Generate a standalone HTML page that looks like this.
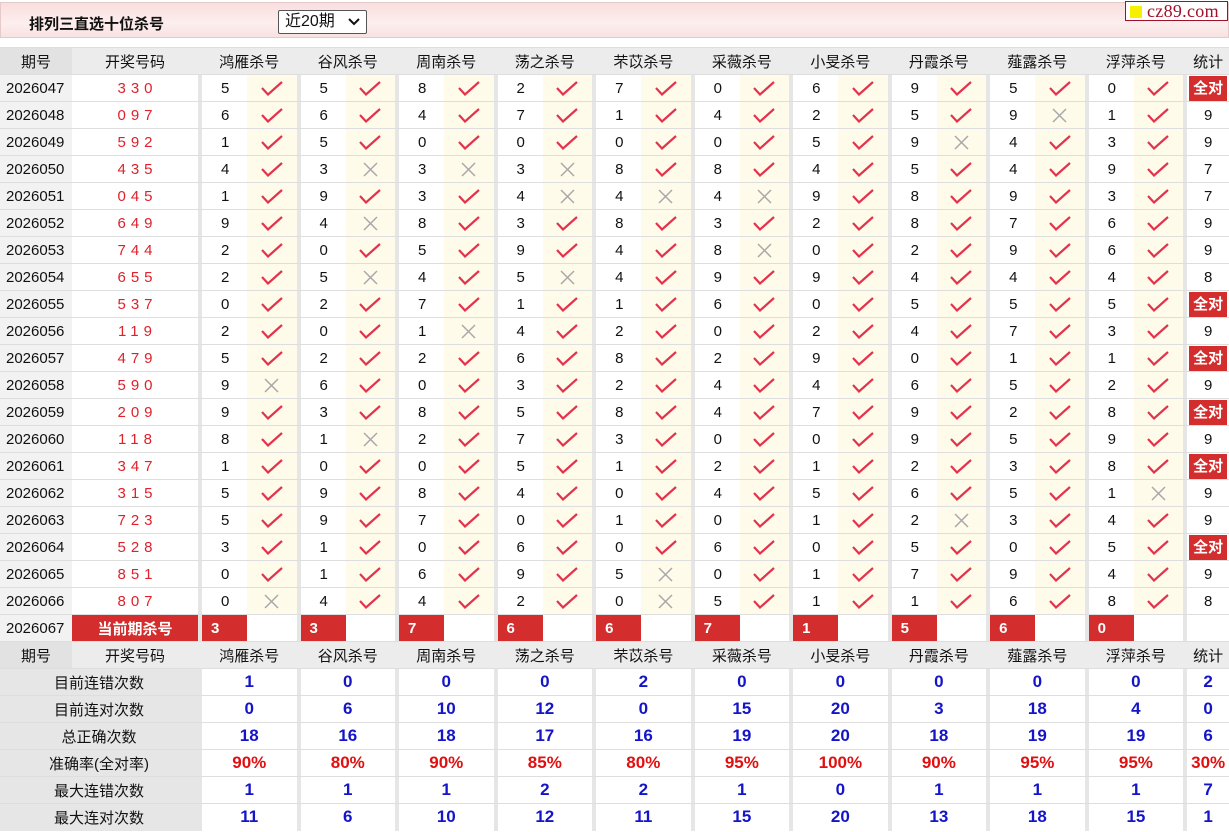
<!DOCTYPE html>
<html><head><meta charset="utf-8">
<style>
*{margin:0;padding:0;box-sizing:border-box}
body{width:1229px;height:832px;background:#fff;font-family:"Liberation Sans","Noto Sans CJK SC",sans-serif;font-size:15px;color:#111;position:relative;overflow:hidden}
.top{position:absolute;left:0;top:2px;width:1229px;height:36px;background:linear-gradient(#f9dede,#fdeeee 60%,#f8e2e2);border:1px solid #e6caca}
.title{position:absolute;left:28px;top:10px;font-weight:bold;font-size:15px;color:#111}
.sel{position:absolute;left:277px;top:7px;width:89px;height:24px;border:1px solid #555;background:#fff;font-size:16px;padding-left:6px;line-height:22px;border-radius:2px}
.sel svg{position:absolute;right:6px;top:7px}
.logo{position:absolute;left:1125px;top:1px;width:103px;height:20px;border:1px solid #a0102a;background:#fff;font-family:"Liberation Serif",serif;font-size:18px;color:#a0102a;line-height:18px;padding-left:21px;letter-spacing:0.3px}
.logo i{position:absolute;left:4px;top:4px;width:12px;height:12px;background:#f5f000}
table{position:absolute;left:0;top:47px;border-collapse:collapse;table-layout:fixed;width:1229px}
td{height:27px;border-top:1px solid #dedede;text-align:center;vertical-align:middle;padding:0;white-space:nowrap;overflow:hidden}
td.s{background:#e6e6e6}
tr.h td{background:#ececec;font-size:15px}
tr.h td.p{background:#e2e2e2}
td.p{background:#f2f2f2;text-align:left;padding-left:6px;font-size:15px}
td.h{color:#e0202a;letter-spacing:5px;padding-left:5px}
td.n{background:#fff;text-align:left;padding-left:19px}
td.m{background:#fffbeb}
td.t{background:#fff}
.qd{display:inline-block;background:#d32d2d;color:#fff;font-weight:bold;width:38px;height:25px;line-height:25px;font-size:15px}
tr.c td.r{background:#d32d2d;color:#fff;font-weight:bold;text-align:left;padding-left:9px}
tr.c td.rh{background:#d32d2d;color:#fff;font-weight:bold;font-size:15px}
tr.c td.w{background:#fff}
tr.st td.l{background:#e6e6e6;font-size:15px}
tr.st td.v{background:#fff;color:#1414c8;font-weight:bold;font-size:17px}
tr.st td.v.red{color:#e01010}
svg.k,svg.x{display:block;margin:0 auto}
</style></head><body>
<svg width="0" height="0" style="position:absolute">
<defs>
<g id="ck"><polyline points="1,7 7,13.5 21,1" fill="none" stroke="#e3334c" stroke-width="2.2" stroke-linejoin="miter"/></g>
<g id="xx"><path d="M2,2 L15,15 M15,2 L2,15" stroke="#a8a8a8" stroke-width="1.5" fill="none"/></g>
</defs></svg>
<div class="top"><div class="title">排列三直选十位杀号</div>
<div class="sel">近20期<svg width="12" height="8" viewBox="0 0 12 8"><path d="M1,1 L6,6 L11,1" fill="none" stroke="#111" stroke-width="2"/></svg></div></div>
<div class="logo"><i></i>cz89.com</div>

<table>
<colgroup><col style="width:72px"><col style="width:126px">
<col style="width:4px"><col style="width:45px"><col style="width:49.5px">
<col style="width:4px"><col style="width:45px"><col style="width:49.5px">
<col style="width:4px"><col style="width:45px"><col style="width:49.5px">
<col style="width:4px"><col style="width:45px"><col style="width:49.5px">
<col style="width:4px"><col style="width:45px"><col style="width:49.5px">
<col style="width:4px"><col style="width:45px"><col style="width:49.5px">
<col style="width:4px"><col style="width:45px"><col style="width:49.5px">
<col style="width:4px"><col style="width:45px"><col style="width:49.5px">
<col style="width:4px"><col style="width:45px"><col style="width:49.5px">
<col style="width:4px"><col style="width:45px"><col style="width:49.5px">
<col style="width:4px"><col style="width:42px"></colgroup>

<tr class="h"><td class="p" style="text-align:center;padding:0">期号</td><td>开奖号码</td><td class="s"></td><td colspan="2">鸿雁杀号</td><td class="s"></td><td colspan="2">谷风杀号</td><td class="s"></td><td colspan="2">周南杀号</td><td class="s"></td><td colspan="2">荡之杀号</td><td class="s"></td><td colspan="2">芣苡杀号</td><td class="s"></td><td colspan="2">采薇杀号</td><td class="s"></td><td colspan="2">小旻杀号</td><td class="s"></td><td colspan="2">丹霞杀号</td><td class="s"></td><td colspan="2">薤露杀号</td><td class="s"></td><td colspan="2">浮萍杀号</td><td class="s"></td><td>统计</td></tr>

<tr><td class="p">2026047</td><td class="h">330</td><td class="s"></td><td class="n">5</td><td class="m"><svg class="k" width="22" height="15"><use href="#ck"/></svg></td><td class="s"></td><td class="n">5</td><td class="m"><svg class="k" width="22" height="15"><use href="#ck"/></svg></td><td class="s"></td><td class="n">8</td><td class="m"><svg class="k" width="22" height="15"><use href="#ck"/></svg></td><td class="s"></td><td class="n">2</td><td class="m"><svg class="k" width="22" height="15"><use href="#ck"/></svg></td><td class="s"></td><td class="n">7</td><td class="m"><svg class="k" width="22" height="15"><use href="#ck"/></svg></td><td class="s"></td><td class="n">0</td><td class="m"><svg class="k" width="22" height="15"><use href="#ck"/></svg></td><td class="s"></td><td class="n">6</td><td class="m"><svg class="k" width="22" height="15"><use href="#ck"/></svg></td><td class="s"></td><td class="n">9</td><td class="m"><svg class="k" width="22" height="15"><use href="#ck"/></svg></td><td class="s"></td><td class="n">5</td><td class="m"><svg class="k" width="22" height="15"><use href="#ck"/></svg></td><td class="s"></td><td class="n">0</td><td class="m"><svg class="k" width="22" height="15"><use href="#ck"/></svg></td><td class="s"></td><td class="t"><span class="qd">全对</span></td></tr>

<tr><td class="p">2026048</td><td class="h">097</td><td class="s"></td><td class="n">6</td><td class="m"><svg class="k" width="22" height="15"><use href="#ck"/></svg></td><td class="s"></td><td class="n">6</td><td class="m"><svg class="k" width="22" height="15"><use href="#ck"/></svg></td><td class="s"></td><td class="n">4</td><td class="m"><svg class="k" width="22" height="15"><use href="#ck"/></svg></td><td class="s"></td><td class="n">7</td><td class="m"><svg class="k" width="22" height="15"><use href="#ck"/></svg></td><td class="s"></td><td class="n">1</td><td class="m"><svg class="k" width="22" height="15"><use href="#ck"/></svg></td><td class="s"></td><td class="n">4</td><td class="m"><svg class="k" width="22" height="15"><use href="#ck"/></svg></td><td class="s"></td><td class="n">2</td><td class="m"><svg class="k" width="22" height="15"><use href="#ck"/></svg></td><td class="s"></td><td class="n">5</td><td class="m"><svg class="k" width="22" height="15"><use href="#ck"/></svg></td><td class="s"></td><td class="n">9</td><td class="m"><svg class="x" width="17" height="17"><use href="#xx"/></svg></td><td class="s"></td><td class="n">1</td><td class="m"><svg class="k" width="22" height="15"><use href="#ck"/></svg></td><td class="s"></td><td class="t">9</td></tr>

<tr><td class="p">2026049</td><td class="h">592</td><td class="s"></td><td class="n">1</td><td class="m"><svg class="k" width="22" height="15"><use href="#ck"/></svg></td><td class="s"></td><td class="n">5</td><td class="m"><svg class="k" width="22" height="15"><use href="#ck"/></svg></td><td class="s"></td><td class="n">0</td><td class="m"><svg class="k" width="22" height="15"><use href="#ck"/></svg></td><td class="s"></td><td class="n">0</td><td class="m"><svg class="k" width="22" height="15"><use href="#ck"/></svg></td><td class="s"></td><td class="n">0</td><td class="m"><svg class="k" width="22" height="15"><use href="#ck"/></svg></td><td class="s"></td><td class="n">0</td><td class="m"><svg class="k" width="22" height="15"><use href="#ck"/></svg></td><td class="s"></td><td class="n">5</td><td class="m"><svg class="k" width="22" height="15"><use href="#ck"/></svg></td><td class="s"></td><td class="n">9</td><td class="m"><svg class="x" width="17" height="17"><use href="#xx"/></svg></td><td class="s"></td><td class="n">4</td><td class="m"><svg class="k" width="22" height="15"><use href="#ck"/></svg></td><td class="s"></td><td class="n">3</td><td class="m"><svg class="k" width="22" height="15"><use href="#ck"/></svg></td><td class="s"></td><td class="t">9</td></tr>

<tr><td class="p">2026050</td><td class="h">435</td><td class="s"></td><td class="n">4</td><td class="m"><svg class="k" width="22" height="15"><use href="#ck"/></svg></td><td class="s"></td><td class="n">3</td><td class="m"><svg class="x" width="17" height="17"><use href="#xx"/></svg></td><td class="s"></td><td class="n">3</td><td class="m"><svg class="x" width="17" height="17"><use href="#xx"/></svg></td><td class="s"></td><td class="n">3</td><td class="m"><svg class="x" width="17" height="17"><use href="#xx"/></svg></td><td class="s"></td><td class="n">8</td><td class="m"><svg class="k" width="22" height="15"><use href="#ck"/></svg></td><td class="s"></td><td class="n">8</td><td class="m"><svg class="k" width="22" height="15"><use href="#ck"/></svg></td><td class="s"></td><td class="n">4</td><td class="m"><svg class="k" width="22" height="15"><use href="#ck"/></svg></td><td class="s"></td><td class="n">5</td><td class="m"><svg class="k" width="22" height="15"><use href="#ck"/></svg></td><td class="s"></td><td class="n">4</td><td class="m"><svg class="k" width="22" height="15"><use href="#ck"/></svg></td><td class="s"></td><td class="n">9</td><td class="m"><svg class="k" width="22" height="15"><use href="#ck"/></svg></td><td class="s"></td><td class="t">7</td></tr>

<tr><td class="p">2026051</td><td class="h">045</td><td class="s"></td><td class="n">1</td><td class="m"><svg class="k" width="22" height="15"><use href="#ck"/></svg></td><td class="s"></td><td class="n">9</td><td class="m"><svg class="k" width="22" height="15"><use href="#ck"/></svg></td><td class="s"></td><td class="n">3</td><td class="m"><svg class="k" width="22" height="15"><use href="#ck"/></svg></td><td class="s"></td><td class="n">4</td><td class="m"><svg class="x" width="17" height="17"><use href="#xx"/></svg></td><td class="s"></td><td class="n">4</td><td class="m"><svg class="x" width="17" height="17"><use href="#xx"/></svg></td><td class="s"></td><td class="n">4</td><td class="m"><svg class="x" width="17" height="17"><use href="#xx"/></svg></td><td class="s"></td><td class="n">9</td><td class="m"><svg class="k" width="22" height="15"><use href="#ck"/></svg></td><td class="s"></td><td class="n">8</td><td class="m"><svg class="k" width="22" height="15"><use href="#ck"/></svg></td><td class="s"></td><td class="n">9</td><td class="m"><svg class="k" width="22" height="15"><use href="#ck"/></svg></td><td class="s"></td><td class="n">3</td><td class="m"><svg class="k" width="22" height="15"><use href="#ck"/></svg></td><td class="s"></td><td class="t">7</td></tr>

<tr><td class="p">2026052</td><td class="h">649</td><td class="s"></td><td class="n">9</td><td class="m"><svg class="k" width="22" height="15"><use href="#ck"/></svg></td><td class="s"></td><td class="n">4</td><td class="m"><svg class="x" width="17" height="17"><use href="#xx"/></svg></td><td class="s"></td><td class="n">8</td><td class="m"><svg class="k" width="22" height="15"><use href="#ck"/></svg></td><td class="s"></td><td class="n">3</td><td class="m"><svg class="k" width="22" height="15"><use href="#ck"/></svg></td><td class="s"></td><td class="n">8</td><td class="m"><svg class="k" width="22" height="15"><use href="#ck"/></svg></td><td class="s"></td><td class="n">3</td><td class="m"><svg class="k" width="22" height="15"><use href="#ck"/></svg></td><td class="s"></td><td class="n">2</td><td class="m"><svg class="k" width="22" height="15"><use href="#ck"/></svg></td><td class="s"></td><td class="n">8</td><td class="m"><svg class="k" width="22" height="15"><use href="#ck"/></svg></td><td class="s"></td><td class="n">7</td><td class="m"><svg class="k" width="22" height="15"><use href="#ck"/></svg></td><td class="s"></td><td class="n">6</td><td class="m"><svg class="k" width="22" height="15"><use href="#ck"/></svg></td><td class="s"></td><td class="t">9</td></tr>

<tr><td class="p">2026053</td><td class="h">744</td><td class="s"></td><td class="n">2</td><td class="m"><svg class="k" width="22" height="15"><use href="#ck"/></svg></td><td class="s"></td><td class="n">0</td><td class="m"><svg class="k" width="22" height="15"><use href="#ck"/></svg></td><td class="s"></td><td class="n">5</td><td class="m"><svg class="k" width="22" height="15"><use href="#ck"/></svg></td><td class="s"></td><td class="n">9</td><td class="m"><svg class="k" width="22" height="15"><use href="#ck"/></svg></td><td class="s"></td><td class="n">4</td><td class="m"><svg class="k" width="22" height="15"><use href="#ck"/></svg></td><td class="s"></td><td class="n">8</td><td class="m"><svg class="x" width="17" height="17"><use href="#xx"/></svg></td><td class="s"></td><td class="n">0</td><td class="m"><svg class="k" width="22" height="15"><use href="#ck"/></svg></td><td class="s"></td><td class="n">2</td><td class="m"><svg class="k" width="22" height="15"><use href="#ck"/></svg></td><td class="s"></td><td class="n">9</td><td class="m"><svg class="k" width="22" height="15"><use href="#ck"/></svg></td><td class="s"></td><td class="n">6</td><td class="m"><svg class="k" width="22" height="15"><use href="#ck"/></svg></td><td class="s"></td><td class="t">9</td></tr>

<tr><td class="p">2026054</td><td class="h">655</td><td class="s"></td><td class="n">2</td><td class="m"><svg class="k" width="22" height="15"><use href="#ck"/></svg></td><td class="s"></td><td class="n">5</td><td class="m"><svg class="x" width="17" height="17"><use href="#xx"/></svg></td><td class="s"></td><td class="n">4</td><td class="m"><svg class="k" width="22" height="15"><use href="#ck"/></svg></td><td class="s"></td><td class="n">5</td><td class="m"><svg class="x" width="17" height="17"><use href="#xx"/></svg></td><td class="s"></td><td class="n">4</td><td class="m"><svg class="k" width="22" height="15"><use href="#ck"/></svg></td><td class="s"></td><td class="n">9</td><td class="m"><svg class="k" width="22" height="15"><use href="#ck"/></svg></td><td class="s"></td><td class="n">9</td><td class="m"><svg class="k" width="22" height="15"><use href="#ck"/></svg></td><td class="s"></td><td class="n">4</td><td class="m"><svg class="k" width="22" height="15"><use href="#ck"/></svg></td><td class="s"></td><td class="n">4</td><td class="m"><svg class="k" width="22" height="15"><use href="#ck"/></svg></td><td class="s"></td><td class="n">4</td><td class="m"><svg class="k" width="22" height="15"><use href="#ck"/></svg></td><td class="s"></td><td class="t">8</td></tr>

<tr><td class="p">2026055</td><td class="h">537</td><td class="s"></td><td class="n">0</td><td class="m"><svg class="k" width="22" height="15"><use href="#ck"/></svg></td><td class="s"></td><td class="n">2</td><td class="m"><svg class="k" width="22" height="15"><use href="#ck"/></svg></td><td class="s"></td><td class="n">7</td><td class="m"><svg class="k" width="22" height="15"><use href="#ck"/></svg></td><td class="s"></td><td class="n">1</td><td class="m"><svg class="k" width="22" height="15"><use href="#ck"/></svg></td><td class="s"></td><td class="n">1</td><td class="m"><svg class="k" width="22" height="15"><use href="#ck"/></svg></td><td class="s"></td><td class="n">6</td><td class="m"><svg class="k" width="22" height="15"><use href="#ck"/></svg></td><td class="s"></td><td class="n">0</td><td class="m"><svg class="k" width="22" height="15"><use href="#ck"/></svg></td><td class="s"></td><td class="n">5</td><td class="m"><svg class="k" width="22" height="15"><use href="#ck"/></svg></td><td class="s"></td><td class="n">5</td><td class="m"><svg class="k" width="22" height="15"><use href="#ck"/></svg></td><td class="s"></td><td class="n">5</td><td class="m"><svg class="k" width="22" height="15"><use href="#ck"/></svg></td><td class="s"></td><td class="t"><span class="qd">全对</span></td></tr>

<tr><td class="p">2026056</td><td class="h">119</td><td class="s"></td><td class="n">2</td><td class="m"><svg class="k" width="22" height="15"><use href="#ck"/></svg></td><td class="s"></td><td class="n">0</td><td class="m"><svg class="k" width="22" height="15"><use href="#ck"/></svg></td><td class="s"></td><td class="n">1</td><td class="m"><svg class="x" width="17" height="17"><use href="#xx"/></svg></td><td class="s"></td><td class="n">4</td><td class="m"><svg class="k" width="22" height="15"><use href="#ck"/></svg></td><td class="s"></td><td class="n">2</td><td class="m"><svg class="k" width="22" height="15"><use href="#ck"/></svg></td><td class="s"></td><td class="n">0</td><td class="m"><svg class="k" width="22" height="15"><use href="#ck"/></svg></td><td class="s"></td><td class="n">2</td><td class="m"><svg class="k" width="22" height="15"><use href="#ck"/></svg></td><td class="s"></td><td class="n">4</td><td class="m"><svg class="k" width="22" height="15"><use href="#ck"/></svg></td><td class="s"></td><td class="n">7</td><td class="m"><svg class="k" width="22" height="15"><use href="#ck"/></svg></td><td class="s"></td><td class="n">3</td><td class="m"><svg class="k" width="22" height="15"><use href="#ck"/></svg></td><td class="s"></td><td class="t">9</td></tr>

<tr><td class="p">2026057</td><td class="h">479</td><td class="s"></td><td class="n">5</td><td class="m"><svg class="k" width="22" height="15"><use href="#ck"/></svg></td><td class="s"></td><td class="n">2</td><td class="m"><svg class="k" width="22" height="15"><use href="#ck"/></svg></td><td class="s"></td><td class="n">2</td><td class="m"><svg class="k" width="22" height="15"><use href="#ck"/></svg></td><td class="s"></td><td class="n">6</td><td class="m"><svg class="k" width="22" height="15"><use href="#ck"/></svg></td><td class="s"></td><td class="n">8</td><td class="m"><svg class="k" width="22" height="15"><use href="#ck"/></svg></td><td class="s"></td><td class="n">2</td><td class="m"><svg class="k" width="22" height="15"><use href="#ck"/></svg></td><td class="s"></td><td class="n">9</td><td class="m"><svg class="k" width="22" height="15"><use href="#ck"/></svg></td><td class="s"></td><td class="n">0</td><td class="m"><svg class="k" width="22" height="15"><use href="#ck"/></svg></td><td class="s"></td><td class="n">1</td><td class="m"><svg class="k" width="22" height="15"><use href="#ck"/></svg></td><td class="s"></td><td class="n">1</td><td class="m"><svg class="k" width="22" height="15"><use href="#ck"/></svg></td><td class="s"></td><td class="t"><span class="qd">全对</span></td></tr>

<tr><td class="p">2026058</td><td class="h">590</td><td class="s"></td><td class="n">9</td><td class="m"><svg class="x" width="17" height="17"><use href="#xx"/></svg></td><td class="s"></td><td class="n">6</td><td class="m"><svg class="k" width="22" height="15"><use href="#ck"/></svg></td><td class="s"></td><td class="n">0</td><td class="m"><svg class="k" width="22" height="15"><use href="#ck"/></svg></td><td class="s"></td><td class="n">3</td><td class="m"><svg class="k" width="22" height="15"><use href="#ck"/></svg></td><td class="s"></td><td class="n">2</td><td class="m"><svg class="k" width="22" height="15"><use href="#ck"/></svg></td><td class="s"></td><td class="n">4</td><td class="m"><svg class="k" width="22" height="15"><use href="#ck"/></svg></td><td class="s"></td><td class="n">4</td><td class="m"><svg class="k" width="22" height="15"><use href="#ck"/></svg></td><td class="s"></td><td class="n">6</td><td class="m"><svg class="k" width="22" height="15"><use href="#ck"/></svg></td><td class="s"></td><td class="n">5</td><td class="m"><svg class="k" width="22" height="15"><use href="#ck"/></svg></td><td class="s"></td><td class="n">2</td><td class="m"><svg class="k" width="22" height="15"><use href="#ck"/></svg></td><td class="s"></td><td class="t">9</td></tr>

<tr><td class="p">2026059</td><td class="h">209</td><td class="s"></td><td class="n">9</td><td class="m"><svg class="k" width="22" height="15"><use href="#ck"/></svg></td><td class="s"></td><td class="n">3</td><td class="m"><svg class="k" width="22" height="15"><use href="#ck"/></svg></td><td class="s"></td><td class="n">8</td><td class="m"><svg class="k" width="22" height="15"><use href="#ck"/></svg></td><td class="s"></td><td class="n">5</td><td class="m"><svg class="k" width="22" height="15"><use href="#ck"/></svg></td><td class="s"></td><td class="n">8</td><td class="m"><svg class="k" width="22" height="15"><use href="#ck"/></svg></td><td class="s"></td><td class="n">4</td><td class="m"><svg class="k" width="22" height="15"><use href="#ck"/></svg></td><td class="s"></td><td class="n">7</td><td class="m"><svg class="k" width="22" height="15"><use href="#ck"/></svg></td><td class="s"></td><td class="n">9</td><td class="m"><svg class="k" width="22" height="15"><use href="#ck"/></svg></td><td class="s"></td><td class="n">2</td><td class="m"><svg class="k" width="22" height="15"><use href="#ck"/></svg></td><td class="s"></td><td class="n">8</td><td class="m"><svg class="k" width="22" height="15"><use href="#ck"/></svg></td><td class="s"></td><td class="t"><span class="qd">全对</span></td></tr>

<tr><td class="p">2026060</td><td class="h">118</td><td class="s"></td><td class="n">8</td><td class="m"><svg class="k" width="22" height="15"><use href="#ck"/></svg></td><td class="s"></td><td class="n">1</td><td class="m"><svg class="x" width="17" height="17"><use href="#xx"/></svg></td><td class="s"></td><td class="n">2</td><td class="m"><svg class="k" width="22" height="15"><use href="#ck"/></svg></td><td class="s"></td><td class="n">7</td><td class="m"><svg class="k" width="22" height="15"><use href="#ck"/></svg></td><td class="s"></td><td class="n">3</td><td class="m"><svg class="k" width="22" height="15"><use href="#ck"/></svg></td><td class="s"></td><td class="n">0</td><td class="m"><svg class="k" width="22" height="15"><use href="#ck"/></svg></td><td class="s"></td><td class="n">0</td><td class="m"><svg class="k" width="22" height="15"><use href="#ck"/></svg></td><td class="s"></td><td class="n">9</td><td class="m"><svg class="k" width="22" height="15"><use href="#ck"/></svg></td><td class="s"></td><td class="n">5</td><td class="m"><svg class="k" width="22" height="15"><use href="#ck"/></svg></td><td class="s"></td><td class="n">9</td><td class="m"><svg class="k" width="22" height="15"><use href="#ck"/></svg></td><td class="s"></td><td class="t">9</td></tr>

<tr><td class="p">2026061</td><td class="h">347</td><td class="s"></td><td class="n">1</td><td class="m"><svg class="k" width="22" height="15"><use href="#ck"/></svg></td><td class="s"></td><td class="n">0</td><td class="m"><svg class="k" width="22" height="15"><use href="#ck"/></svg></td><td class="s"></td><td class="n">0</td><td class="m"><svg class="k" width="22" height="15"><use href="#ck"/></svg></td><td class="s"></td><td class="n">5</td><td class="m"><svg class="k" width="22" height="15"><use href="#ck"/></svg></td><td class="s"></td><td class="n">1</td><td class="m"><svg class="k" width="22" height="15"><use href="#ck"/></svg></td><td class="s"></td><td class="n">2</td><td class="m"><svg class="k" width="22" height="15"><use href="#ck"/></svg></td><td class="s"></td><td class="n">1</td><td class="m"><svg class="k" width="22" height="15"><use href="#ck"/></svg></td><td class="s"></td><td class="n">2</td><td class="m"><svg class="k" width="22" height="15"><use href="#ck"/></svg></td><td class="s"></td><td class="n">3</td><td class="m"><svg class="k" width="22" height="15"><use href="#ck"/></svg></td><td class="s"></td><td class="n">8</td><td class="m"><svg class="k" width="22" height="15"><use href="#ck"/></svg></td><td class="s"></td><td class="t"><span class="qd">全对</span></td></tr>

<tr><td class="p">2026062</td><td class="h">315</td><td class="s"></td><td class="n">5</td><td class="m"><svg class="k" width="22" height="15"><use href="#ck"/></svg></td><td class="s"></td><td class="n">9</td><td class="m"><svg class="k" width="22" height="15"><use href="#ck"/></svg></td><td class="s"></td><td class="n">8</td><td class="m"><svg class="k" width="22" height="15"><use href="#ck"/></svg></td><td class="s"></td><td class="n">4</td><td class="m"><svg class="k" width="22" height="15"><use href="#ck"/></svg></td><td class="s"></td><td class="n">0</td><td class="m"><svg class="k" width="22" height="15"><use href="#ck"/></svg></td><td class="s"></td><td class="n">4</td><td class="m"><svg class="k" width="22" height="15"><use href="#ck"/></svg></td><td class="s"></td><td class="n">5</td><td class="m"><svg class="k" width="22" height="15"><use href="#ck"/></svg></td><td class="s"></td><td class="n">6</td><td class="m"><svg class="k" width="22" height="15"><use href="#ck"/></svg></td><td class="s"></td><td class="n">5</td><td class="m"><svg class="k" width="22" height="15"><use href="#ck"/></svg></td><td class="s"></td><td class="n">1</td><td class="m"><svg class="x" width="17" height="17"><use href="#xx"/></svg></td><td class="s"></td><td class="t">9</td></tr>

<tr><td class="p">2026063</td><td class="h">723</td><td class="s"></td><td class="n">5</td><td class="m"><svg class="k" width="22" height="15"><use href="#ck"/></svg></td><td class="s"></td><td class="n">9</td><td class="m"><svg class="k" width="22" height="15"><use href="#ck"/></svg></td><td class="s"></td><td class="n">7</td><td class="m"><svg class="k" width="22" height="15"><use href="#ck"/></svg></td><td class="s"></td><td class="n">0</td><td class="m"><svg class="k" width="22" height="15"><use href="#ck"/></svg></td><td class="s"></td><td class="n">1</td><td class="m"><svg class="k" width="22" height="15"><use href="#ck"/></svg></td><td class="s"></td><td class="n">0</td><td class="m"><svg class="k" width="22" height="15"><use href="#ck"/></svg></td><td class="s"></td><td class="n">1</td><td class="m"><svg class="k" width="22" height="15"><use href="#ck"/></svg></td><td class="s"></td><td class="n">2</td><td class="m"><svg class="x" width="17" height="17"><use href="#xx"/></svg></td><td class="s"></td><td class="n">3</td><td class="m"><svg class="k" width="22" height="15"><use href="#ck"/></svg></td><td class="s"></td><td class="n">4</td><td class="m"><svg class="k" width="22" height="15"><use href="#ck"/></svg></td><td class="s"></td><td class="t">9</td></tr>

<tr><td class="p">2026064</td><td class="h">528</td><td class="s"></td><td class="n">3</td><td class="m"><svg class="k" width="22" height="15"><use href="#ck"/></svg></td><td class="s"></td><td class="n">1</td><td class="m"><svg class="k" width="22" height="15"><use href="#ck"/></svg></td><td class="s"></td><td class="n">0</td><td class="m"><svg class="k" width="22" height="15"><use href="#ck"/></svg></td><td class="s"></td><td class="n">6</td><td class="m"><svg class="k" width="22" height="15"><use href="#ck"/></svg></td><td class="s"></td><td class="n">0</td><td class="m"><svg class="k" width="22" height="15"><use href="#ck"/></svg></td><td class="s"></td><td class="n">6</td><td class="m"><svg class="k" width="22" height="15"><use href="#ck"/></svg></td><td class="s"></td><td class="n">0</td><td class="m"><svg class="k" width="22" height="15"><use href="#ck"/></svg></td><td class="s"></td><td class="n">5</td><td class="m"><svg class="k" width="22" height="15"><use href="#ck"/></svg></td><td class="s"></td><td class="n">0</td><td class="m"><svg class="k" width="22" height="15"><use href="#ck"/></svg></td><td class="s"></td><td class="n">5</td><td class="m"><svg class="k" width="22" height="15"><use href="#ck"/></svg></td><td class="s"></td><td class="t"><span class="qd">全对</span></td></tr>

<tr><td class="p">2026065</td><td class="h">851</td><td class="s"></td><td class="n">0</td><td class="m"><svg class="k" width="22" height="15"><use href="#ck"/></svg></td><td class="s"></td><td class="n">1</td><td class="m"><svg class="k" width="22" height="15"><use href="#ck"/></svg></td><td class="s"></td><td class="n">6</td><td class="m"><svg class="k" width="22" height="15"><use href="#ck"/></svg></td><td class="s"></td><td class="n">9</td><td class="m"><svg class="k" width="22" height="15"><use href="#ck"/></svg></td><td class="s"></td><td class="n">5</td><td class="m"><svg class="x" width="17" height="17"><use href="#xx"/></svg></td><td class="s"></td><td class="n">0</td><td class="m"><svg class="k" width="22" height="15"><use href="#ck"/></svg></td><td class="s"></td><td class="n">1</td><td class="m"><svg class="k" width="22" height="15"><use href="#ck"/></svg></td><td class="s"></td><td class="n">7</td><td class="m"><svg class="k" width="22" height="15"><use href="#ck"/></svg></td><td class="s"></td><td class="n">9</td><td class="m"><svg class="k" width="22" height="15"><use href="#ck"/></svg></td><td class="s"></td><td class="n">4</td><td class="m"><svg class="k" width="22" height="15"><use href="#ck"/></svg></td><td class="s"></td><td class="t">9</td></tr>

<tr><td class="p">2026066</td><td class="h">807</td><td class="s"></td><td class="n">0</td><td class="m"><svg class="x" width="17" height="17"><use href="#xx"/></svg></td><td class="s"></td><td class="n">4</td><td class="m"><svg class="k" width="22" height="15"><use href="#ck"/></svg></td><td class="s"></td><td class="n">4</td><td class="m"><svg class="k" width="22" height="15"><use href="#ck"/></svg></td><td class="s"></td><td class="n">2</td><td class="m"><svg class="k" width="22" height="15"><use href="#ck"/></svg></td><td class="s"></td><td class="n">0</td><td class="m"><svg class="x" width="17" height="17"><use href="#xx"/></svg></td><td class="s"></td><td class="n">5</td><td class="m"><svg class="k" width="22" height="15"><use href="#ck"/></svg></td><td class="s"></td><td class="n">1</td><td class="m"><svg class="k" width="22" height="15"><use href="#ck"/></svg></td><td class="s"></td><td class="n">1</td><td class="m"><svg class="k" width="22" height="15"><use href="#ck"/></svg></td><td class="s"></td><td class="n">6</td><td class="m"><svg class="k" width="22" height="15"><use href="#ck"/></svg></td><td class="s"></td><td class="n">8</td><td class="m"><svg class="k" width="22" height="15"><use href="#ck"/></svg></td><td class="s"></td><td class="t">8</td></tr>

<tr class="c"><td class="p">2026067</td><td class="rh">当前期杀号</td><td class="s"></td><td class="r">3</td><td class="w"></td><td class="s"></td><td class="r">3</td><td class="w"></td><td class="s"></td><td class="r">7</td><td class="w"></td><td class="s"></td><td class="r">6</td><td class="w"></td><td class="s"></td><td class="r">6</td><td class="w"></td><td class="s"></td><td class="r">7</td><td class="w"></td><td class="s"></td><td class="r">1</td><td class="w"></td><td class="s"></td><td class="r">5</td><td class="w"></td><td class="s"></td><td class="r">6</td><td class="w"></td><td class="s"></td><td class="r">0</td><td class="w"></td><td class="s"></td><td class="w"></td></tr>

<tr class="h"><td class="p" style="text-align:center;padding:0">期号</td><td>开奖号码</td><td class="s"></td><td colspan="2">鸿雁杀号</td><td class="s"></td><td colspan="2">谷风杀号</td><td class="s"></td><td colspan="2">周南杀号</td><td class="s"></td><td colspan="2">荡之杀号</td><td class="s"></td><td colspan="2">芣苡杀号</td><td class="s"></td><td colspan="2">采薇杀号</td><td class="s"></td><td colspan="2">小旻杀号</td><td class="s"></td><td colspan="2">丹霞杀号</td><td class="s"></td><td colspan="2">薤露杀号</td><td class="s"></td><td colspan="2">浮萍杀号</td><td class="s"></td><td>统计</td></tr>

<tr class="st"><td class="l" colspan="2">目前连错次数</td><td class="s"></td><td class="v" colspan="2">1</td><td class="s"></td><td class="v" colspan="2">0</td><td class="s"></td><td class="v" colspan="2">0</td><td class="s"></td><td class="v" colspan="2">0</td><td class="s"></td><td class="v" colspan="2">2</td><td class="s"></td><td class="v" colspan="2">0</td><td class="s"></td><td class="v" colspan="2">0</td><td class="s"></td><td class="v" colspan="2">0</td><td class="s"></td><td class="v" colspan="2">0</td><td class="s"></td><td class="v" colspan="2">0</td><td class="s"></td><td class="v">2</td></tr>
<tr class="st"><td class="l" colspan="2">目前连对次数</td><td class="s"></td><td class="v" colspan="2">0</td><td class="s"></td><td class="v" colspan="2">6</td><td class="s"></td><td class="v" colspan="2">10</td><td class="s"></td><td class="v" colspan="2">12</td><td class="s"></td><td class="v" colspan="2">0</td><td class="s"></td><td class="v" colspan="2">15</td><td class="s"></td><td class="v" colspan="2">20</td><td class="s"></td><td class="v" colspan="2">3</td><td class="s"></td><td class="v" colspan="2">18</td><td class="s"></td><td class="v" colspan="2">4</td><td class="s"></td><td class="v">0</td></tr>
<tr class="st"><td class="l" colspan="2">总正确次数</td><td class="s"></td><td class="v" colspan="2">18</td><td class="s"></td><td class="v" colspan="2">16</td><td class="s"></td><td class="v" colspan="2">18</td><td class="s"></td><td class="v" colspan="2">17</td><td class="s"></td><td class="v" colspan="2">16</td><td class="s"></td><td class="v" colspan="2">19</td><td class="s"></td><td class="v" colspan="2">20</td><td class="s"></td><td class="v" colspan="2">18</td><td class="s"></td><td class="v" colspan="2">19</td><td class="s"></td><td class="v" colspan="2">19</td><td class="s"></td><td class="v">6</td></tr>
<tr class="st"><td class="l" colspan="2">准确率(全对率)</td><td class="s"></td><td class="v red" colspan="2">90%</td><td class="s"></td><td class="v red" colspan="2">80%</td><td class="s"></td><td class="v red" colspan="2">90%</td><td class="s"></td><td class="v red" colspan="2">85%</td><td class="s"></td><td class="v red" colspan="2">80%</td><td class="s"></td><td class="v red" colspan="2">95%</td><td class="s"></td><td class="v red" colspan="2">100%</td><td class="s"></td><td class="v red" colspan="2">90%</td><td class="s"></td><td class="v red" colspan="2">95%</td><td class="s"></td><td class="v red" colspan="2">95%</td><td class="s"></td><td class="v red">30%</td></tr>
<tr class="st"><td class="l" colspan="2">最大连错次数</td><td class="s"></td><td class="v" colspan="2">1</td><td class="s"></td><td class="v" colspan="2">1</td><td class="s"></td><td class="v" colspan="2">1</td><td class="s"></td><td class="v" colspan="2">2</td><td class="s"></td><td class="v" colspan="2">2</td><td class="s"></td><td class="v" colspan="2">1</td><td class="s"></td><td class="v" colspan="2">0</td><td class="s"></td><td class="v" colspan="2">1</td><td class="s"></td><td class="v" colspan="2">1</td><td class="s"></td><td class="v" colspan="2">1</td><td class="s"></td><td class="v">7</td></tr>
<tr class="st"><td class="l" colspan="2">最大连对次数</td><td class="s"></td><td class="v" colspan="2">11</td><td class="s"></td><td class="v" colspan="2">6</td><td class="s"></td><td class="v" colspan="2">10</td><td class="s"></td><td class="v" colspan="2">12</td><td class="s"></td><td class="v" colspan="2">11</td><td class="s"></td><td class="v" colspan="2">15</td><td class="s"></td><td class="v" colspan="2">20</td><td class="s"></td><td class="v" colspan="2">13</td><td class="s"></td><td class="v" colspan="2">18</td><td class="s"></td><td class="v" colspan="2">15</td><td class="s"></td><td class="v">1</td></tr>
</table>
</body></html>
